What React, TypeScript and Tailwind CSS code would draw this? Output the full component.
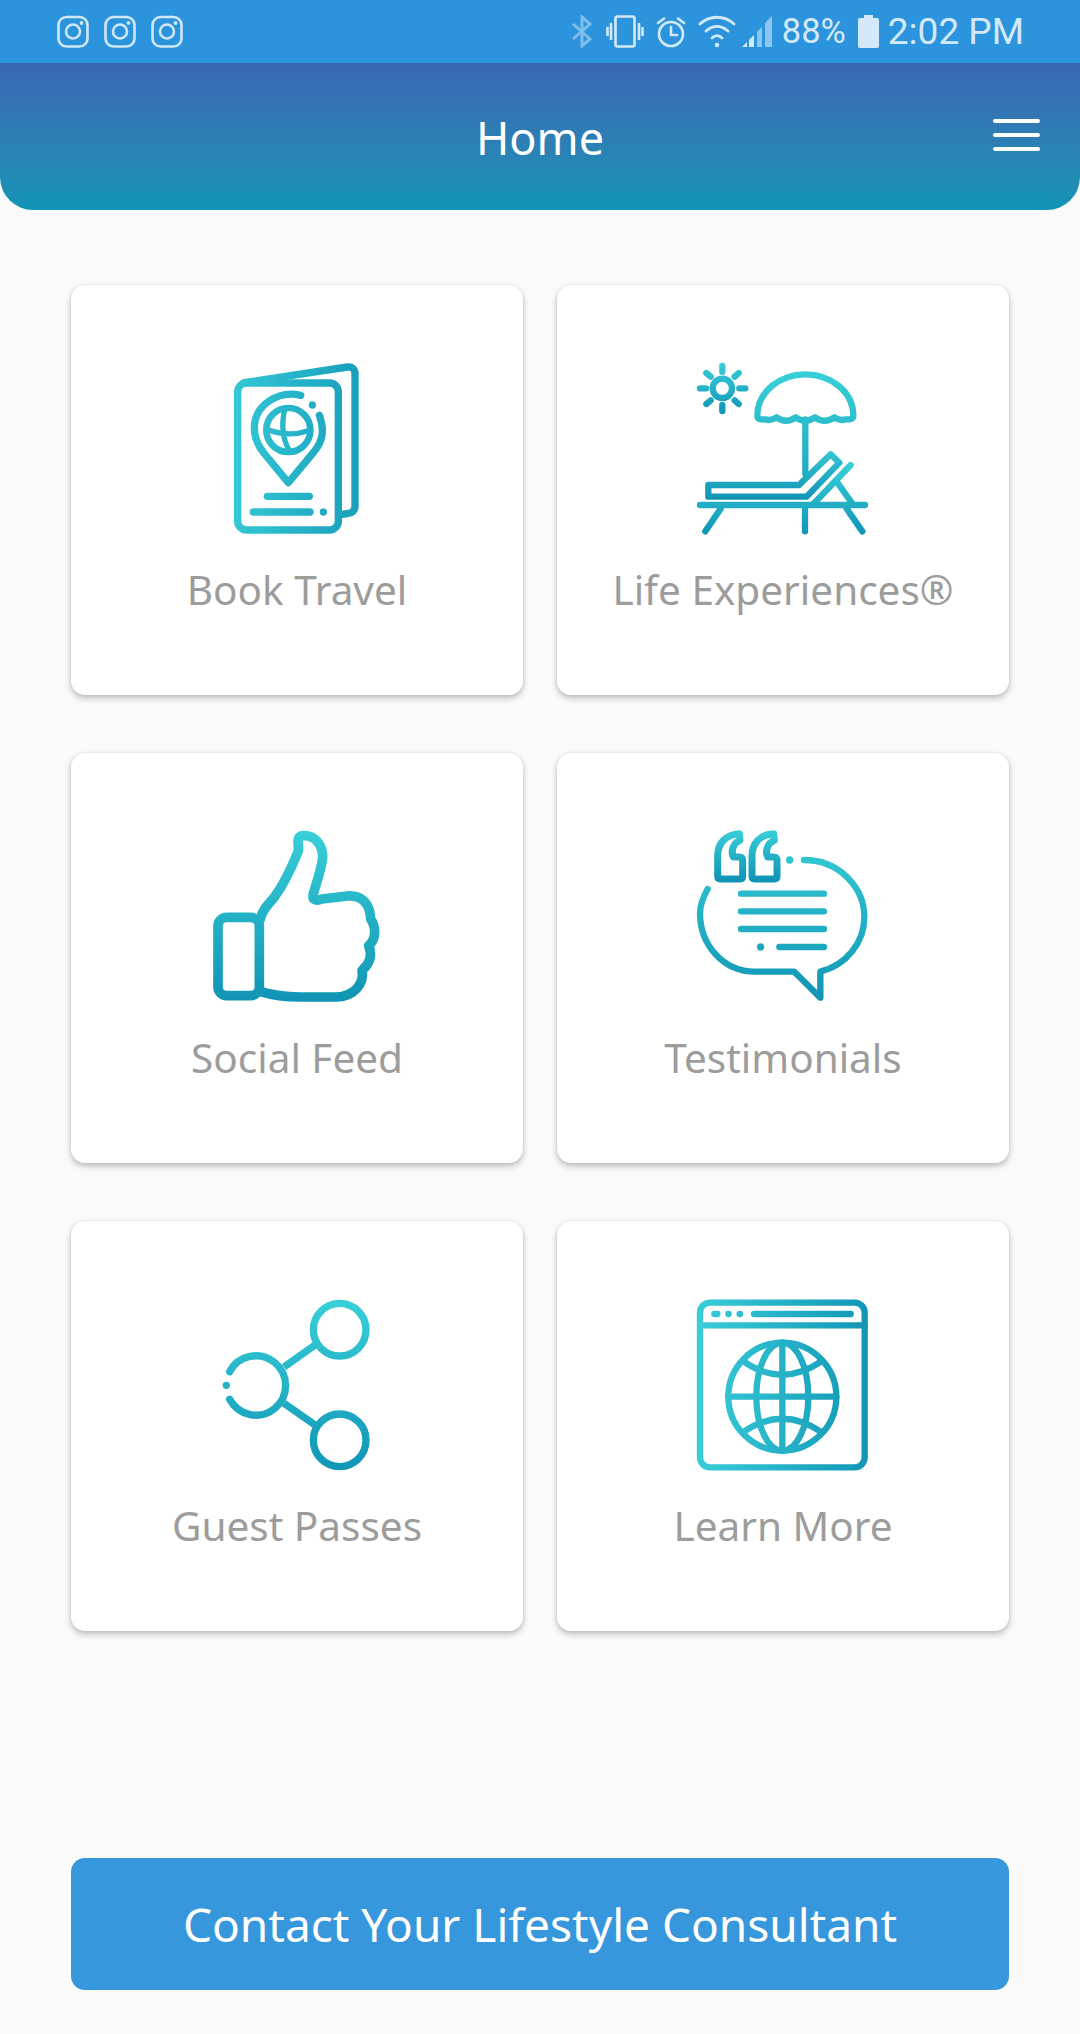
import React from 'react';

const FONT = "font-['Noto_Sans','Open_Sans',sans-serif]";

// Shared horizontal / vertical teal fades for the tile icons
const TileGradients = () => (
  <svg width="0" height="0" className="absolute">
    <defs>
      <linearGradient id="tealAcross" gradientUnits="userSpaceOnUse" x1="50" y1="300" x2="560" y2="300">
        <stop offset="0" stopColor="#38cdd8" />
        <stop offset="1" stopColor="#1296b6" />
      </linearGradient>
      <linearGradient id="tealDown" gradientUnits="userSpaceOnUse" x1="300" y1="40" x2="300" y2="560">
        <stop offset="0" stopColor="#38d0d8" />
        <stop offset="1" stopColor="#1094b5" />
      </linearGradient>
      <linearGradient id="tealSun" gradientUnits="userSpaceOnUse" x1="127" y1="40" x2="127" y2="190">
        <stop offset="0" stopColor="#38ccd8" />
        <stop offset="1" stopColor="#1296b6" />
      </linearGradient>
      <linearGradient id="tealUmbrella" gradientUnits="userSpaceOnUse" x1="376" y1="60" x2="376" y2="400">
        <stop offset="0" stopColor="#38d0d8" />
        <stop offset="1" stopColor="#20a8c0" />
      </linearGradient>
      <linearGradient id="tealSeat" gradientUnits="userSpaceOnUse" x1="300" y1="300" x2="300" y2="445">
        <stop offset="0" stopColor="#38c8d4" />
        <stop offset="1" stopColor="#1094b5" />
      </linearGradient>
      <linearGradient id="tealLegs" gradientUnits="userSpaceOnUse" x1="300" y1="340" x2="300" y2="550">
        <stop offset="0" stopColor="#38d0d8" />
        <stop offset="1" stopColor="#1296b6" />
      </linearGradient>
      <linearGradient id="tealQuote" gradientUnits="userSpaceOnUse" x1="200" y1="50" x2="200" y2="195">
        <stop offset="0" stopColor="#38cdd8" />
        <stop offset="1" stopColor="#1094b5" />
      </linearGradient>
    </defs>
  </svg>
);

const TileSvg = ({ box, children }: { box: string; children: React.ReactNode }) => (
  <svg
    viewBox={box}
    className="w-[200px] h-[200px] overflow-visible"
    fill="none"
    strokeLinecap="round"
    strokeLinejoin="round"
  >
    {children}
  </svg>
);

const PassportIcon = () => (
  <TileSvg box="-9 30 600 600">
    <g stroke="url(#tealAcross)" strokeWidth="22">
      <rect x="113" y="129" width="302" height="441" rx="26" />
      <path d="M132 128 L442 81 C456 79 465 88 465 100 V498 C465 512 456 519 445 520 L428 523" />
      <path d="M302 166 C235 150 163 195 163 265 C163 295 176 320 192 340 L265 428 L338 340 C362 312 378 280 358 226" />
      <circle cx="265" cy="270" r="66" strokeWidth="20" />
      <path d="M205 270 Q265 292 325 272" strokeWidth="16" />
      <path d="M254 208 Q238 280 268 332" strokeWidth="16" />
      <path d="M202 469 H328" />
      <path d="M160 516 H330" />
    </g>
    <circle cx="337" cy="195" r="11" fill="url(#tealAcross)" />
    <circle cx="370" cy="516" r="11" fill="url(#tealAcross)" />
  </TileSvg>
);

const LoungerIcon = () => (
  <TileSvg box="9 0 600 600">
    <g stroke="url(#tealSun)" strokeWidth="19">
      <circle cx="127" cy="115" r="29" />
      <path d="M127 48 V65 M127 165 V183 M60 115 H78 M178 115 H196 M79 69 L92 80 M176 69 L164 80 M79 162 L92 151 M176 162 L164 151" />
    </g>
    <g stroke="url(#tealUmbrella)" strokeWidth="19">
      <path d="M232 198 C232 125 300 73 376 73 C452 73 520 125 520 198 Q520 210 497 208 Q480 214 463 202 Q434 222 405 202 Q376 222 347 202 Q318 222 290 202 Q272 214 255 208 Q232 210 232 198 Z" />
      <path d="M376 208 V372" />
    </g>
    <path d="M85 405 H357 L452 313 L478 338 L380 440 H85 Z" stroke="url(#tealSeat)" strokeWidth="19" />
    <g stroke="url(#tealLegs)" strokeWidth="19">
      <path d="M400 462 L512 345 M470 395 L518 462" />
      <path d="M60 465 H555" />
      <path d="M122 476 L76 544 M375 472 V544 M500 476 L547 544" />
    </g>
  </TileSvg>
);

const ThumbIcon = () => (
  <TileSvg box="-9 9 600 600">
    <g stroke="url(#tealDown)" strokeWidth="29">
      <rect x="54" y="307" width="124" height="235" rx="26" />
      <path d="M181 312 C186 285 205 268 222 248 C252 208 276 155 295 108 C298 90 284 64 310 62 C342 60 366 85 368 122 C368 152 350 200 339 240 C337 256 350 258 366 252 L442 243 C488 240 510 268 512 312 C528 335 530 372 506 392 C520 425 505 450 486 466 C494 505 462 546 408 546 L300 546 C255 546 215 540 182 530" />
    </g>
  </TileSvg>
);

const ChatIcon = () => (
  <TileSvg box="9 9 600 600">
    <g stroke="url(#tealQuote)" strokeWidth="21">
      <path d="M178 56 C138 58 113 85 113 122 V184 Q113 192 121 192 H180 Q188 192 188 184 V137 Q188 126 177 126 H160 C152 110 158 85 180 76 Z" />
      <path d="M281 56 C241 58 216 85 216 122 V184 Q216 192 224 192 H283 Q291 192 291 184 V137 Q291 126 280 126 H263 C255 110 261 85 283 76 Z" />
    </g>
    <g stroke="url(#tealDown)" strokeWidth="19">
      <path d="M372 135 C480 135 553 220 553 305 C553 382 500 450 421 470 V548 L343 470 H225 C130 470 60 390 60 295 C60 270 70 245 83 222" />
      <path d="M183 236 H432 M183 289 H432 M183 342 H432 M298 396 H432" />
    </g>
    <circle cx="329" cy="135" r="11" fill="url(#tealDown)" />
    <circle cx="242" cy="396" r="11" fill="url(#tealDown)" />
  </TileSvg>
);

const ShareIcon = () => (
  <TileSvg box="-9 0 600 600">
    <g stroke="url(#tealDown)" strokeWidth="22">
      <circle cx="419" cy="131" r="79" />
      <circle cx="419" cy="463" r="79" />
      <path d="M89 257 A89 89 0 1 1 89 340" />
      <path d="M252 243 L344 178 M252 352 L344 416" strokeLinecap="butt" />
    </g>
    <circle cx="79" cy="298" r="11" fill="url(#tealDown)" />
  </TileSvg>
);

const BrowserIcon = () => (
  <TileSvg box="9 0 600 600">
    <g stroke="url(#tealAcross)" strokeWidth="19">
      <rect x="60" y="50" width="494" height="494" rx="30" />
      <path d="M60 118 H554" />
      <path d="M103 84 H112 M145 84 H146 M179 84 H180" />
      <path d="M222 84 H512" />
      <circle cx="307" cy="332" r="162" />
      <path d="M307 170 V494 M145 332 H469" />
      <ellipse cx="307" cy="332" rx="78" ry="162" />
      <path d="M190 226 Q307 306 424 226 M190 438 Q307 358 424 438" />
    </g>
  </TileSvg>
);

const InstagramGlyph = () => (
  <svg viewBox="0 0 32 32" className="w-[32px] h-[33px]" fill="none" stroke="#cfe7f8" strokeWidth="2.6">
    <rect x="1.5" y="1.5" width="29" height="29.5" rx="8" />
    <circle cx="16" cy="16" r="7" />
    <circle cx="24.5" cy="7.5" r="1.9" fill="#cfe7f8" stroke="none" />
  </svg>
);

const StatusBar = () => (
  <div className="h-[63px] bg-[#2c93dd] flex items-center justify-between pl-[57px] pr-[56px] text-[#d3e9f9] font-['Roboto',sans-serif]">
    <div className="flex gap-[15px]">
      <InstagramGlyph />
      <InstagramGlyph />
      <InstagramGlyph />
    </div>
    <div className="flex items-center">
      {/* bluetooth, dimmed while nothing is paired */}
      <svg viewBox="0 0 20 33" className="w-[20px] h-[33px]" fill="none" stroke="#7fbdeb" strokeWidth="3">
        <path d="M1 9 L18 24 L10 31 V2 L18 9 L1 24" />
      </svg>
      {/* vibrate */}
      <svg viewBox="0 0 38 33" className="w-[38px] h-[33px] ml-[14px]" fill="none" stroke="#d3e9f9" strokeWidth="2.6">
        <rect x="9.5" y="1.5" width="19" height="30" rx="2" />
        <path d="M5 8 V25 M1.5 12 V21 M33 8 V25 M36.5 12 V21" />
      </svg>
      {/* alarm */}
      <svg viewBox="0 0 30 33" className="w-[30px] h-[33px] ml-[12px]" fill="none" stroke="#d3e9f9" strokeWidth="2.6" strokeLinecap="round">
        <circle cx="15" cy="19" r="12" />
        <path d="M15 12 V20 H21 M2 8 L8 3.5 M28 8 L22 3.5" />
      </svg>
      {/* wifi */}
      <svg viewBox="0 0 38 33" className="w-[38px] h-[33px] ml-[12px]" fill="none" stroke="#d3e9f9" strokeWidth="2.8" strokeLinecap="round">
        <path d="M2 9 C12 0 26 0 36 9 M8 16 C15 10 23 10 30 16 M14 23 C17 20 21 20 24 23" />
        <circle cx="19" cy="30" r="2.2" fill="#d3e9f9" stroke="none" />
      </svg>
      {/* signal bars */}
      <svg viewBox="0 0 31 33" className="w-[31px] h-[33px] ml-[6px]">
        <path d="M0 32 L5 27 V32 Z" fill="#d3e9f9" />
        <path d="M7 32 V25 L12 20 V32 Z" fill="#d3e9f9" />
        <path d="M15 32 V17 L20 12 V32 Z" fill="#8cc5ee" />
        <path d="M24 32 V8 L31 1 V32 Z" fill="#8cc5ee" transform="translate(-1 0)" />
      </svg>
      <span className="ml-[9px] text-[34.5px] leading-[33px]">88%</span>
      {/* battery */}
      <svg viewBox="0 0 21 33" className="w-[21px] h-[33px] ml-[12px]" fill="#d3e9f9">
        <rect x="6" y="0" width="9" height="3" />
        <rect x="0" y="3" width="21" height="30" rx="2" />
      </svg>
      <span className="ml-[9px] text-[37px] leading-[33px]">2:02 PM</span>
    </div>
  </div>
);

const TopBar = () => (
  <header className="h-[147px] rounded-b-[33px] bg-gradient-to-b from-[#3a67b3] to-[#1094b5] grid grid-cols-[1fr_auto_1fr] items-center">
    <div />
    <h1 className={`${FONT} text-white text-[45px] leading-none font-normal pt-[1px]`}>Home</h1>
    <button className="justify-self-end mr-[40px] w-[47px] flex flex-col gap-[10px] mb-[4px]">
      <span className="block h-[4px] rounded-full bg-white" />
      <span className="block h-[4px] rounded-full bg-white" />
      <span className="block h-[4px] rounded-full bg-white" />
    </button>
  </header>
);

const tiles = [
  { label: 'Book Travel', Icon: PassportIcon },
  { label: 'Life Experiences®', Icon: LoungerIcon },
  { label: 'Social Feed', Icon: ThumbIcon },
  { label: 'Testimonials', Icon: ChatIcon },
  { label: 'Guest Passes', Icon: ShareIcon },
  { label: 'Learn More', Icon: BrowserIcon },
];

export default function App() {
  return (
    <div className={`${FONT} w-[1080px] h-[2034px] bg-[#fafafa] overflow-hidden`}>
      <TileGradients />
      <StatusBar />
      <TopBar />
      <main className="px-[71px] pt-[75px]">
        <div className="grid grid-cols-2 gap-x-[34px] gap-y-[58px]">
          {tiles.map(({ label, Icon }) => (
            <div
              key={label}
              className="h-[410px] bg-white rounded-[14px] shadow-[0_3px_6px_rgba(0,0,0,0.26),0_0_2px_rgba(0,0,0,0.1)] flex flex-col items-center pt-[65px]"
            >
              <Icon />
              <span className="mt-[15px] text-[40.5px] leading-[50px] text-[#9c9c9c]">{label}</span>
            </div>
          ))}
        </div>
        <button className="mt-[227px] w-full h-[132px] rounded-[14px] bg-[#3797dc] text-white text-[46px] leading-none">
          Contact Your Lifestyle Consultant
        </button>
      </main>
    </div>
  );
}
